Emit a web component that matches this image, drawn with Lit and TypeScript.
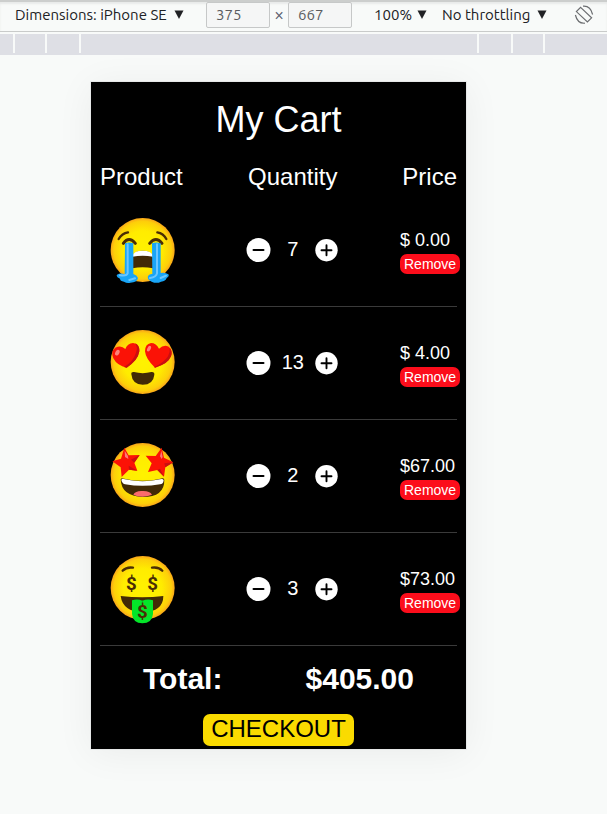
import { LitElement, html, css, svg } from "lit";
import { customElement, property, state } from "lit/decorators.js";

const faceGradient = (id: string) => svg`
  <defs>
    <radialGradient id=${id} cx="50%" cy="50%" r="50%">
      <stop offset="0" stop-color="#fff200"></stop>
      <stop offset="0.6" stop-color="#ffec00"></stop>
      <stop offset="0.9" stop-color="#fdce0a"></stop>
      <stop offset="1" stop-color="#f9a51a"></stop>
    </radialGradient>
  </defs>`;

const crying = svg`
  ${faceGradient("g-cry")}
  <circle cx="159" cy="135" r="96" fill="url(#g-cry)"></circle>
  <path d="M87 102Q97 85 115 82M230 102Q221 85 203 82" fill="none" stroke="#4a2d05" stroke-width="7" stroke-linecap="round"></path>
  <path d="M101 115Q118 92 137 115M180 115Q199 92 217 115" fill="none" stroke="#4a2d05" stroke-width="9" stroke-linecap="round"></path>
  <path d="M128 190V160Q130 137 159 137Q188 137 190 160V190Q159 183 128 190Z" fill="#422a06"></path>
  <path d="M128 155Q130 137 159 137Q188 137 190 155Q159 149 128 155Z" fill="#fff"></path>
  <path d="M106 115Q118 110 131 115V207Q142 210 145 219Q142 233 122 233Q112 236 103 230Q91 228 91 221Q78 216 82 209Q91 203 105 207Z" fill="#19a5f7"></path>
  <path d="M187 115Q200 110 213 115V204Q228 202 236 208Q240 214 231 219Q228 229 214 230Q201 237 186 230Q172 225 175 213Q180 206 188 207Z" fill="#19a5f7"></path>
  <path d="M114 118V205Q112 214 91 211M202 118V205Q200 216 181 219M119 225L136 220M213 219L229 212" fill="none" stroke="#6cc6ff" stroke-width="6" stroke-linecap="round"></path>`;

const loving = svg`
  ${faceGradient("g-love")}
  <circle cx="159" cy="126" r="96" fill="url(#g-love)"></circle>
  <path d="M125 163Q124 155 133 156Q159 163 185 156Q195 155 194 164Q191 194 159 194Q128 194 125 163Z" fill="#422a06"></path>
  <path d="M111 143Q82 137 71 115Q62 94 77 83Q94 74 107 87Q113 70 130 69Q150 71 149 94Q145 121 111 143Z" fill="#fb1206"></path>
  <path d="M111 143Q145 121 149 94Q150 76 137 70Q145 83 139 98Q132 123 103 141Z" fill="#c90f10"></path>
  <path d="M196 143Q168 117 166 94Q166 72 184 69Q200 69 208 86Q222 73 237 80Q250 91 244 109Q235 132 196 143Z" fill="#fb1206"></path>
  <path d="M196 143Q235 132 244 109Q249 93 240 83Q242 95 235 109Q222 129 194 141Z" fill="#c90f10"></path>
  <ellipse cx="83" cy="98" rx="6" ry="9" transform="rotate(30 83 98)" fill="#ff8078"></ellipse>
  <ellipse cx="178" cy="86" rx="5" ry="9" transform="rotate(28 178 86)" fill="#ff8078"></ellipse>`;

const starry = svg`
  ${faceGradient("g-star")}
  <circle cx="159" cy="126" r="96" fill="url(#g-star)"></circle>
  <path d="M93 139Q95 133 104 137Q159 150 212 137Q222 133 224 140Q225 192 159 192Q95 190 93 139Z" fill="#422a06"></path>
  <path d="M95 140Q98 135 106 139Q159 151 211 139Q219 136 222 141Q221 154 211 154Q159 163 106 154Q96 150 95 140Z" fill="#fff"></path>
  <path d="M131 185Q137 173 158 174Q180 173 187 185Q177 190 159 191Q142 191 131 185Z" fill="#fb6b6c"></path>
  <path d="M104 44L117 67L150 66L134 89L143 113L118 110L96 132L93 103L68 85L94 77Z" fill="#fb1206"></path>
  <path d="M216 44L223 74L251 88L227 103L223 131L203 111L175 117L186 91L168 68L198 69Z" fill="#fb1206"></path>
  <path d="M150 66L134 89L124 80ZM143 113L118 110L117 98ZM251 88L227 103L224 91ZM223 131L203 111L211 107Z" fill="#c90f10"></path>
  <path d="M105 53L115 69L116 78L106 72ZM215 53L219 72L216 78L211 70Z" fill="#ff7777"></path>`;

const rich = svg`
  ${faceGradient("g-rich")}
  <circle cx="159" cy="126" r="96" fill="url(#g-rich)"></circle>
  <path d="M99 74Q111 62 130 65M218 74Q207 62 187 65" fill="none" stroke="#4a2d05" stroke-width="7" stroke-linecap="round"></path>
  <path d="M93 150Q159 158 221 150Q221 196 159 200Q99 196 93 150Z" fill="#422a06"></path>
  <path d="M127 163Q143 157 158 164Q175 157 190 163V204Q187 232 158 232Q130 232 127 204Z" fill="#04e529"></path>
  <path d="M158 164V176" stroke="#07b924" stroke-width="3"></path>
  <g class="coin" text-anchor="middle">
    <text x="125" y="131">$</text>
    <text x="189" y="131">$</text>
    <text x="158" y="215">$</text>
  </g>`;

interface Item {
  name: string;
  art: unknown;
  box: string;
  quantity: number;
  price: string;
}

@customElement("cart-row-stepper")
class CartRowStepper extends LitElement {
  @property() name = "";
  @property({ type: Number }) quantity = 0;

  static styles = css`
    :host {
      display: flex;
      align-items: center;
      justify-content: center;
    }
    .step {
      display: flex;
      padding: 0;
      border: 0;
      background: none;
      cursor: pointer;
    }
    .count {
      width: 44px;
      text-align: center;
      font-size: 20px;
      line-height: 24px;
      padding-bottom: 2px;
    }
  `;

  private change(by: number) {
    this.dispatchEvent(new CustomEvent("step", { detail: by }));
  }

  render() {
    return html`
      <button class="step" aria-label="Decrease ${this.name}" @click=${() => this.change(-1)}>
        <svg width="25" height="25" viewBox="0 0 25 25">
          <circle cx="12.5" cy="12" r="12" fill="#fff"></circle>
          <path d="M7.5 12h10" stroke="#000" stroke-width="2" stroke-linecap="round"></path>
        </svg>
      </button>
      <span class="count">${this.quantity}</span>
      <button class="step" aria-label="Increase ${this.name}" @click=${() => this.change(1)}>
        <svg width="23" height="23" viewBox="0 0 23 23">
          <circle cx="11.5" cy="11.2" r="11.2" fill="#fff"></circle>
          <path d="M6.5 11.2h10M11.5 6.2v10" stroke="#000" stroke-width="1.9" stroke-linecap="round"></path>
        </svg>
      </button>
    `;
  }
}

@customElement("device-toolbar")
class DeviceToolbar extends LitElement {
  static styles = css`
    :host {
      display: block;
    }
    .bar {
      display: flex;
      align-items: center;
      box-sizing: border-box;
      height: 32px;
      padding: 0 13px 4px 15px;
      overflow: hidden;
      border-top: 2px solid #cccecd;
      border-bottom: 1px solid #c9cbca;
      box-shadow: inset 0 2px 2px #e8eae9;
      color: #202124;
    }
    .pick {
      display: grid;
      align-items: center;
      flex: none;
    }
    .pick > * {
      grid-area: 1 / 1;
    }
    .pick svg {
      justify-self: end;
      pointer-events: none;
    }
    .device {
      width: 169px;
      margin-right: 22px;
    }
    .scale {
      width: 53px;
      margin-left: 22px;
    }
    .speed {
      width: 105px;
      margin-left: 15px;
    }
    select,
    input,
    .times {
      font-family: Ubuntu, "Noto Sans", sans-serif;
      font-size: 15px;
      line-height: 20px;
    }
    select {
      appearance: none;
      width: 100%;
      padding: 0;
      border: 0;
      background: none;
      color: inherit;
    }
    input {
      box-sizing: border-box;
      flex: none;
      width: 64px;
      height: 26px;
      padding: 0 9px;
      border: 1px solid #c6c8c8;
      border-radius: 2px;
      background: #f5f6f6;
      color: #5a5c60;
    }
    .times {
      flex: none;
      width: 18px;
      text-align: center;
      font-size: 18px;
      line-height: 18px;
      padding-bottom: 2px;
      color: #5a5f70;
    }
    .rotate {
      display: flex;
      flex: none;
      margin-left: auto;
      padding: 0;
      border: 0;
      background: none;
    }
    .ruler {
      display: flex;
      justify-content: center;
      box-sizing: border-box;
      height: 21px;
      margin-top: 2px;
      padding: 0 50px 2px 0;
      overflow: hidden;
      background: #dedfe5;
    }
    .zone {
      box-sizing: border-box;
      flex: none;
      width: 32px;
      border-left: 2px solid #f8faf9;
    }
    .inner {
      width: 34px;
    }
    .middle {
      width: 398px;
    }
    .last {
      width: 2px;
    }
  `;

  private arrow() {
    return html`<svg width="10" height="9" viewBox="0 0 10 9" aria-hidden="true">
      <path d="M0.5 0.5h9L5 9z" fill="#202124"></path>
    </svg>`;
  }

  render() {
    return html`
      <div class="bar">
        <div class="pick device">
          <select aria-label="Device"><option>Dimensions: iPhone SE</option></select>
          ${this.arrow()}
        </div>
        <input aria-label="Width" value="375" />
        <span class="times">×</span>
        <input aria-label="Height" value="667" />
        <div class="pick scale">
          <select aria-label="Zoom"><option>100%</option></select>
          ${this.arrow()}
        </div>
        <div class="pick speed">
          <select aria-label="Throttling"><option>No throttling</option></select>
          ${this.arrow()}
        </div>
        <button class="rotate" aria-label="Rotate">
          <svg width="20" height="20" viewBox="0 0 20 20" fill="none" stroke="#6b6d70" stroke-width="1.2">
            <path d="M6.6 2.4L17.6 12.8L13.4 17L2.4 6.6Z"></path>
            <path d="M9 1.2Q16.500 0.500 18.600 9.500M1.400 10Q3.500 18.800 11 18.200"></path>
          </svg>
        </button>
      </div>
      <div class="ruler">
        <i class="zone"></i><i class="zone inner"></i><i class="zone middle"></i>
        <i class="zone inner"></i><i class="zone"></i><i class="zone last"></i>
      </div>
    `;
  }
}

@customElement("app-root")
class AppRoot extends LitElement {
  @state() private items: Item[] = [
    { name: "Crying face", art: crying, box: "52 27 216 216", quantity: 7, price: "$\u00a00.00" },
    { name: "Heart eyes", art: loving, box: "52 21 216 216", quantity: 13, price: "$\u00a04.00" },
    { name: "Star eyes", art: starry, box: "52 21 216 216", quantity: 2, price: "$67.00" },
    { name: "Money face", art: rich, box: "52 21 216 216", quantity: 3, price: "$73.00" },
  ];

  static styles = css`
    :host {
      display: block;
      min-height: 100vh;
      background: #f8faf9;
      font-family: "Liberation Sans", Arial, sans-serif;
    }
    .stage {
      display: flex;
      justify-content: center;
      padding: 27px 50px 64px 0;
    }
    .cart {
      box-sizing: border-box;
      width: 100%;
      max-width: 375px;
      padding: 17px 9px 3px;
      background: #000;
      color: #fff;
      box-shadow: 0 0 0 1px #e6e8e8, 0 4px 36px rgba(0, 0, 0, 0.06);
    }
    h1 {
      margin: 0 0 20px;
      font-size: 36px;
      font-weight: 400;
      line-height: 42px;
      text-align: center;
    }
    table {
      width: 100%;
      table-layout: fixed;
      border-collapse: collapse;
    }
    th {
      padding: 0 0 1px;
      font-size: 24px;
      font-weight: 400;
      line-height: 32px;
    }
    .product {
      width: 34%;
      text-align: left;
    }
    .quantity {
      width: 40%;
    }
    .price {
      width: 26%;
      text-align: right;
    }
    td {
      height: 112px;
      padding: 0;
      border-bottom: 1px solid #3a3a3a;
    }
    .amount {
      padding-right: 2px;
    }
    .emoji {
      display: block;
      width: 72px;
      height: 72px;
      margin-left: 7px;
    }
    .coin {
      font-family: Roboto, sans-serif;
      font-size: 56px;
      font-weight: 700;
      fill: #4a2d05;
    }
    .cost {
      width: 57px;
      margin-left: auto;
      font-size: 18px;
      line-height: 26px;
      white-space: nowrap;
    }
    .remove {
      display: block;
      height: 20px;
      margin-top: 1px;
      padding: 0 4px;
      border: 0;
      border-radius: 7px;
      background: #fc0d1b;
      color: #fff;
      font: 14px/20px "Liberation Sans", Arial, sans-serif;
    }
    .total {
      display: flex;
      justify-content: space-between;
      margin: 16px 43px 18px;
      font-size: 30px;
      font-weight: 700;
      line-height: 34px;
    }
    .checkout {
      display: block;
      height: 32px;
      margin: 0 auto;
      padding: 0 8px 2px;
      border: 0;
      border-radius: 7px;
      background: #fadb00;
      color: #000;
      font: 24px/30px "Liberation Sans", Arial, sans-serif;
    }
  `;

  private step(item: Item, by: number) {
    this.items = this.items.map((i) =>
      i === item ? { ...i, quantity: Math.max(0, i.quantity + by) } : i
    );
  }

  private remove(item: Item) {
    this.items = this.items.filter((i) => i !== item);
  }

  render() {
    return html`
      <device-toolbar></device-toolbar>
      <div class="stage">
        <main class="cart">
          <h1>My Cart</h1>
          <table>
            <thead>
              <tr>
                <th class="product">Product</th>
                <th class="quantity">Quantity</th>
                <th class="price">Price</th>
              </tr>
            </thead>
            <tbody>
              ${this.items.map(
                (item) => html`<tr>
                  <td>
                    <svg class="emoji" viewBox=${item.box} role="img" aria-label=${item.name}>${item.art}</svg>
                  </td>
                  <td class="amount">
                    <cart-row-stepper
                      .name=${item.name}
                      .quantity=${item.quantity}
                      @step=${(e: CustomEvent) => this.step(item, e.detail)}
                    ></cart-row-stepper>
                  </td>
                  <td>
                    <div class="cost">
                      ${item.price}
                      <button class="remove" @click=${() => this.remove(item)}>Remove</button>
                    </div>
                  </td>
                </tr>`
              )}
            </tbody>
          </table>
          <div class="total"><span>Total:</span><span>$405.00</span></div>
          <button class="checkout">CHECKOUT</button>
        </main>
      </div>
    `;
  }
}
